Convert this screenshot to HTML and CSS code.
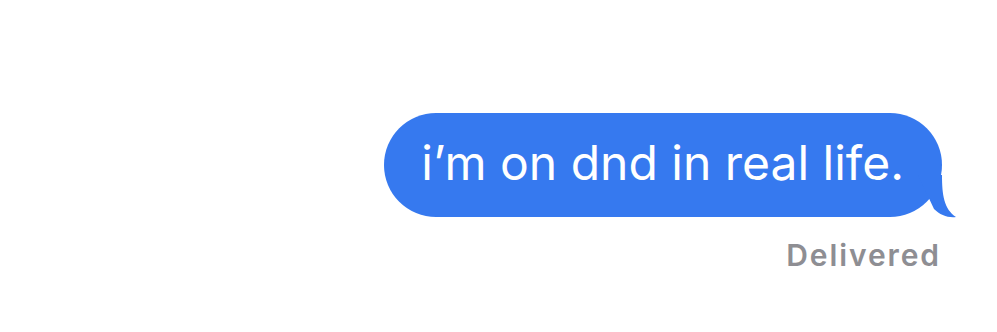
FILE: index.html
```html
<!DOCTYPE html>
<html>
<head>
<meta charset="utf-8">
<link rel="stylesheet" href="styles.css">
</head>
<body>
<div class="thread">
  <div class="row">
    <div class="bubble">
      <span class="text">i’m on dnd in real life.</span>
      <svg class="tail" width="40" height="44" viewBox="0 0 40 44">
        <path d="M24 0 C24 20 26 34 38 42 C30 43 22 40 16 34 L0 0 Z" fill="#3679ef"/>
      </svg>
    </div>
  </div>
  <div class="status">Delivered</div>
</div>
</body>
</html>
```
FILE: styles.css
```css
html, body {
  margin: 0;
  padding: 0;
  background: #ffffff;
}
body {
  width: 997px;
  height: 332px;
  overflow: hidden;
  font-family: Inter, "Noto Sans", sans-serif;
}
.thread {
  display: flex;
  flex-direction: column;
  align-items: flex-end;
  padding: 113px 55px 0 0;
}
.row {
  display: flex;
  justify-content: flex-end;
}
.bubble {
  position: relative;
  background: #3679ef;
  color: #ffffff;
  height: 104px;
  border-radius: 52px;
  padding: 0 38px 0 37px;
  display: flex;
  align-items: center;
  box-sizing: border-box;
}
.text {
  font-size: 48px;
  line-height: 1;
  letter-spacing: 0;
  white-space: nowrap;
  position: relative;
  top: -2px;
  z-index: 1;
}
.tail {
  position: absolute;
  right: -16px;
  bottom: -2px;
}
.status {
  margin-top: 20px;
  margin-right: 1px;
  font-size: 30px;
  font-weight: 600;
  color: #8e8e93;
  letter-spacing: 1.9px;
}
```
